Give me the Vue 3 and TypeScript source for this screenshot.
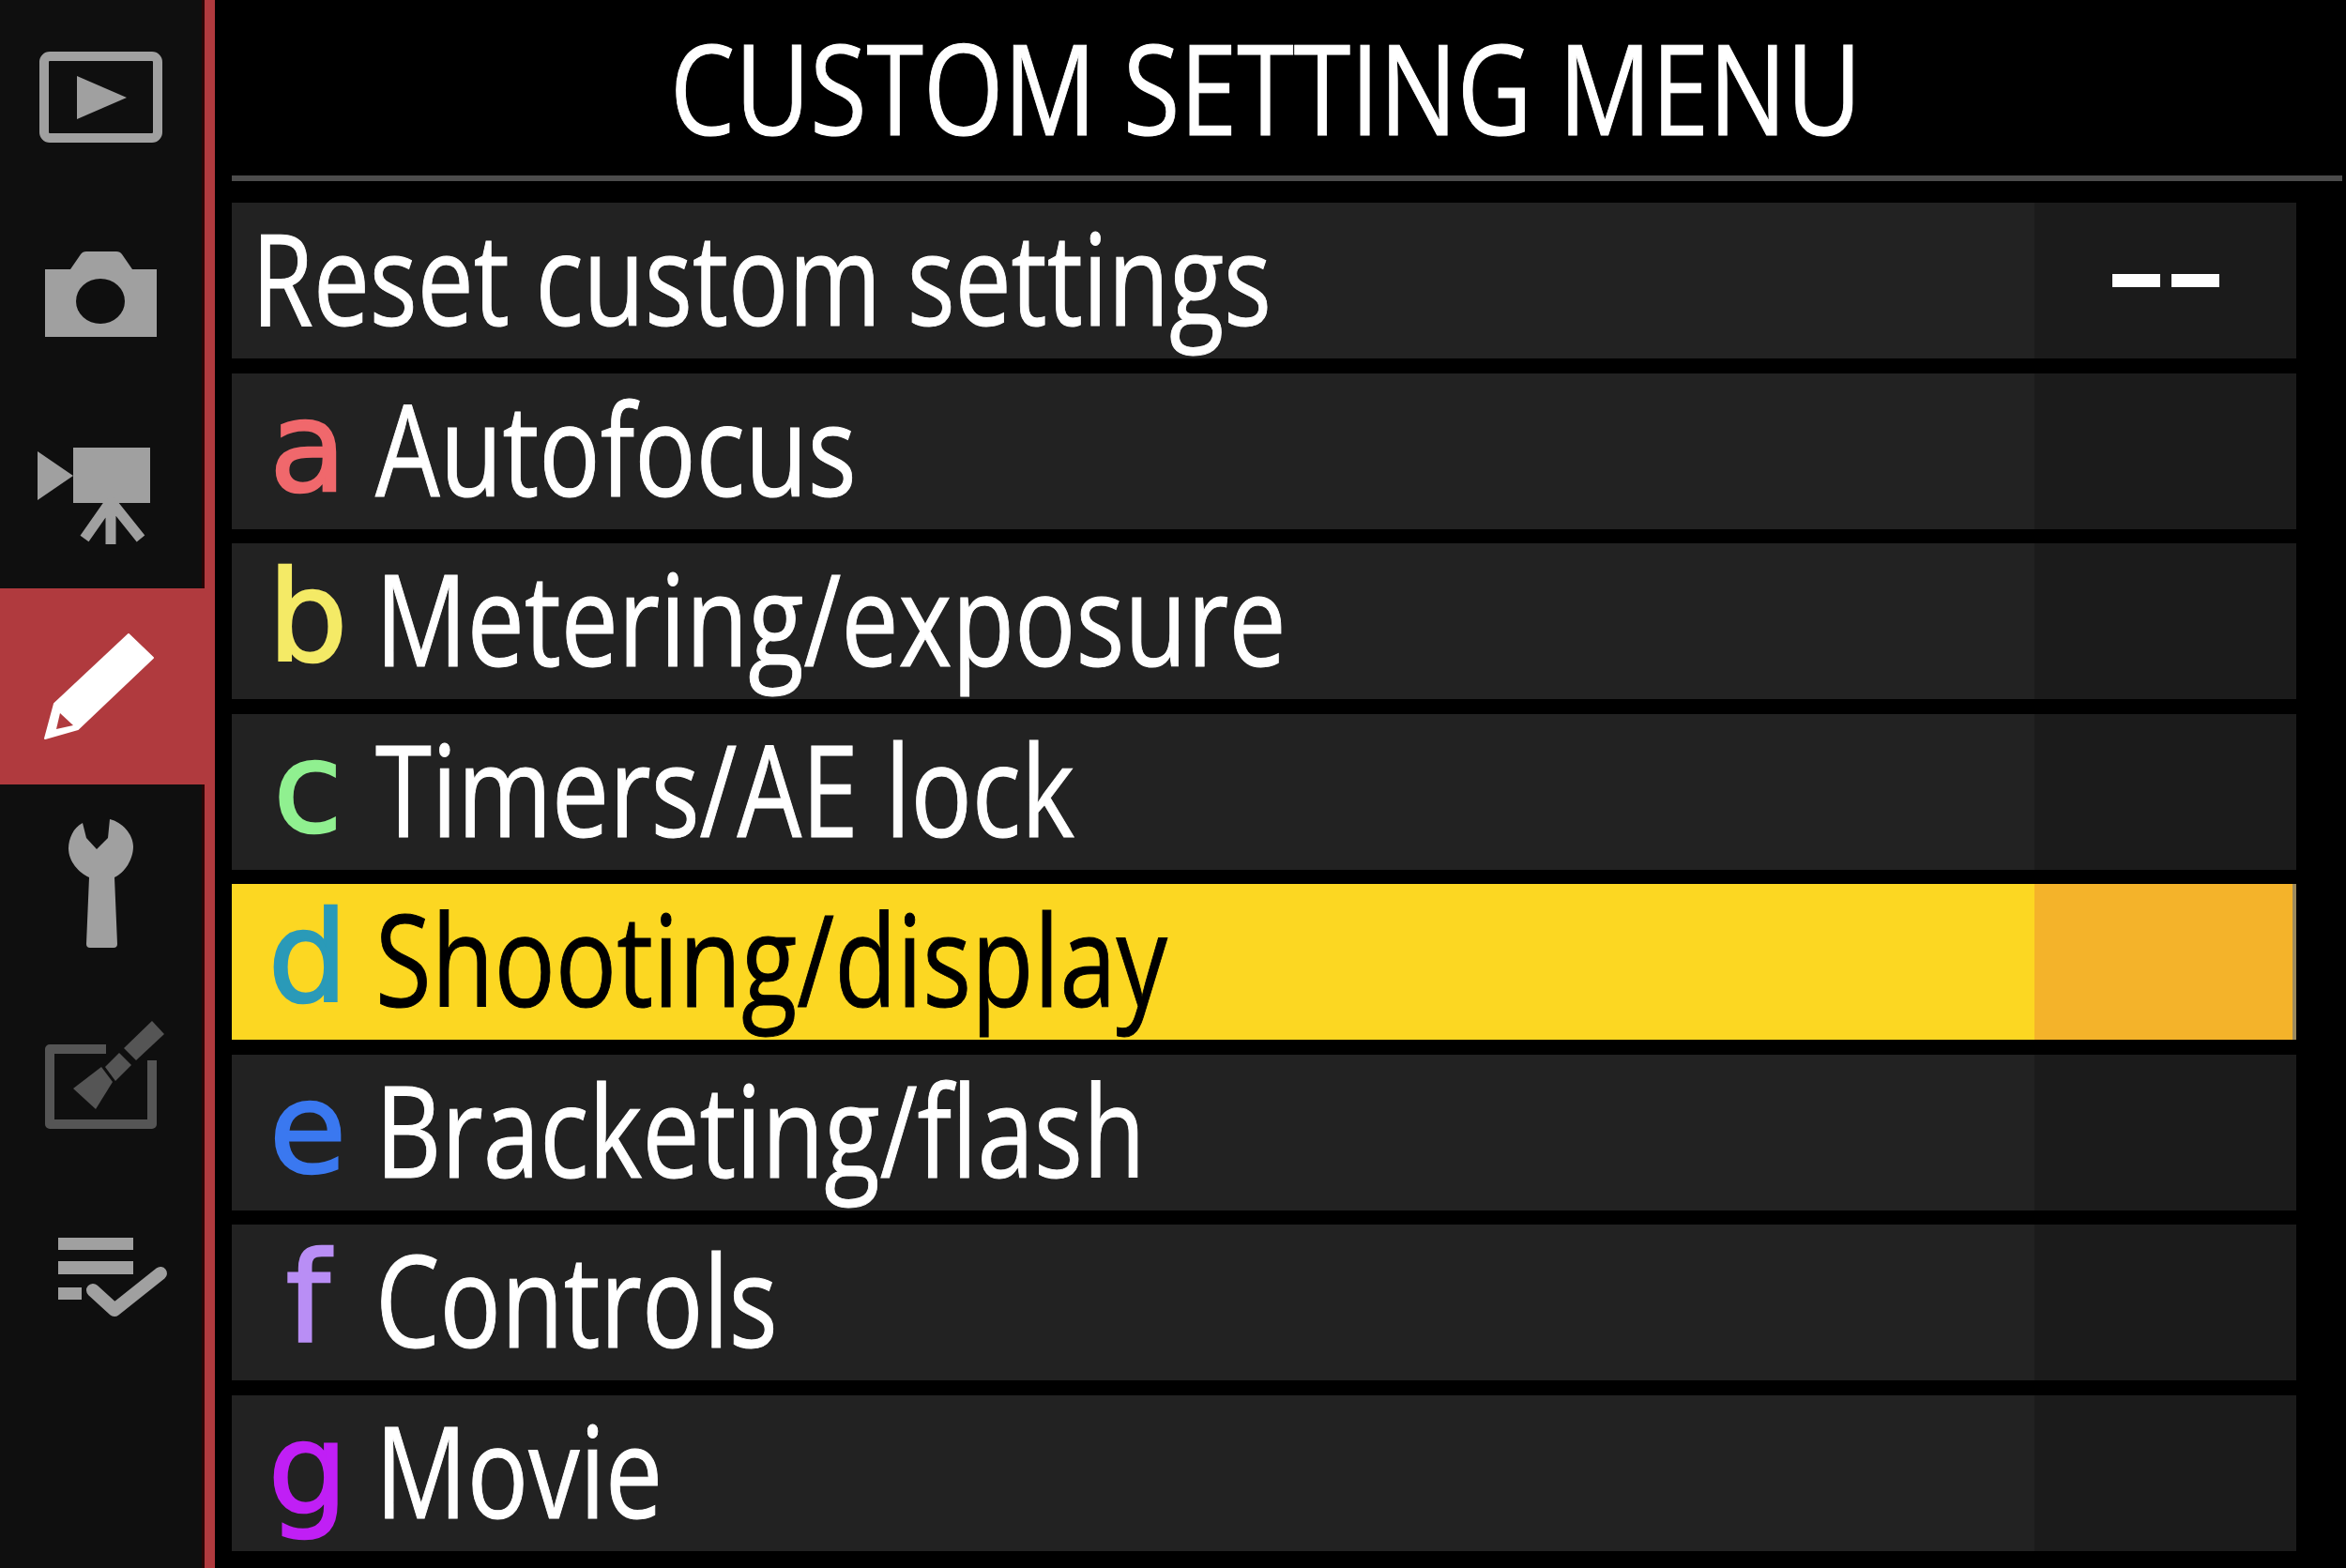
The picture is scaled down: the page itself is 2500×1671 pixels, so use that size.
<script setup lang="ts">
type MenuRow = { key: string; label: string; color: string; active?: boolean };

const rows: MenuRow[] = [
  { key: 'a', label: 'Autofocus', color: '#f0686c' },
  { key: 'b', label: 'Metering/exposure', color: '#f4ea66' },
  { key: 'c', label: 'Timers/AE lock', color: '#90f090' },
  { key: 'd', label: 'Shooting/display', color: '#2a9ab8', active: true },
  { key: 'e', label: 'Bracketing/flash', color: '#3a78f0' },
  { key: 'f', label: 'Controls', color: '#b98ef5' },
  { key: 'g', label: 'Movie', color: '#c01ff5' },
];
</script>

<template>
  <div class="screen">
    <nav class="side">
      <div class="tab">
        <svg viewBox="0 0 218 209" class="ico">
          <rect x="47" y="60" width="121" height="87" rx="6" fill="none" stroke="#a0a0a0" stroke-width="10" />
          <polygon points="82,81 135,104 82,127" fill="#a0a0a0" />
        </svg>
      </div>
      <div class="tab">
        <svg viewBox="0 0 218 209" class="ico">
          <path d="M48 78H75L86 62Q88 59 92 59H124Q128 59 130 62L141 78H167V150H48Z" fill="#a0a0a0" />
          <ellipse cx="107" cy="112" rx="26" ry="24" fill="#0f0f0f" />
        </svg>
      </div>
      <div class="tab">
        <svg viewBox="0 0 218 209" class="ico">
          <polygon points="40,63 78,89 40,115" fill="#a0a0a0" />
          <rect x="78" y="59" width="82" height="59" fill="#a0a0a0" />
          <path d="M118 116L90 156M118 116V162M118 116L150 156" stroke="#a0a0a0" stroke-width="11" fill="none" />
        </svg>
      </div>
      <div class="tab tab--active">
        <svg viewBox="0 0 218 209" class="ico">
          <path d="M137 49L163 74L83 150L48 160L58 123Z" fill="#fff" stroke="#fff" stroke-width="2" stroke-linejoin="round" />
          <polygon points="64,133 78,146 60,150" fill="#b03a3e" />
        </svg>
      </div>
      <div class="tab">
        <svg viewBox="0 0 218 209" class="ico">
          <path d="M88 41C78 46 73 58 73 68C73 82 84 94 95 99L92 170Q92 174 96 174H121Q125 174 125 170L122 99C133 94 142 80 142 66C142 53 130 40 117 37L115 57L103 69L92 57Z" fill="#a0a0a0" />
        </svg>
      </div>
      <div class="tab">
        <svg viewBox="0 0 218 209" class="ico">
          <path d="M113 73H53V153H162V85" fill="none" stroke="#555" stroke-width="10" stroke-linejoin="round" />
          <polygon points="162,43 175,57 145,85 132,72" fill="#555" />
          <polygon points="127,77 140,90 123,107 112,92" fill="#555" />
          <polygon points="108,92 120,108 102,137 78,115" fill="#555" />
        </svg>
      </div>
      <div class="tab">
        <svg viewBox="0 0 218 209" class="ico">
          <rect x="62" y="65" width="80" height="13" fill="#a0a0a0" />
          <rect x="62" y="90" width="80" height="14" fill="#a0a0a0" />
          <rect x="62" y="118" width="25" height="13" fill="#a0a0a0" />
          <path d="M99 121L122 142L171 103" fill="none" stroke="#a0a0a0" stroke-width="14" stroke-linecap="round" stroke-linejoin="round" />
        </svg>
      </div>
    </nav>

    <main class="body">
      <h1 class="title"><span class="squeeze squeeze--title">CUSTOM SETTING MENU</span></h1>
      <div class="rule"></div>
      <ul class="list">
        <li class="row">
          <span class="name name--reset"><span class="squeeze squeeze--reset">Reset custom settings</span></span>
          <span class="val"><i class="dash"></i><i class="dash"></i></span>
        </li>
        <li v-for="r in rows" :key="r.key" class="row" :class="{ 'row--active': r.active }">
          <span class="name">
            <span class="key" :style="{ color: r.color }">{{ r.key }}</span>
            <span class="squeeze">{{ r.label }}</span>
          </span>
          <span class="val"></span>
        </li>
      </ul>
    </main>
  </div>
</template>

<style>
html,
body {
  margin: 0;
  background: #000;
}
</style>

<style scoped>
.screen {
  display: flex;
  width: 2500px;
  height: 1671px;
  overflow: hidden;
  background: #000;
  font-family: 'Open Sans', 'Noto Sans', sans-serif;
}

.side {
  width: 218px;
  flex: none;
  background: #0f0f0f;
  border-right: 11px solid #b03a3e;
  box-shadow: inset -3px 0 0 #2a0505;
}

.tab {
  height: 209px;
}

.tab--active {
  background: #b03a3e;
  width: 229px;
}

.ico {
  display: block;
  width: 218px;
  height: 209px;
}

.body {
  flex: 1;
  padding-left: 18px;
}

.title {
  height: 187px;
  margin: 0;
  padding-left: 467px;
  font-size: 134px;
  line-height: 184px;
  font-weight: 400;
  color: #fff;
  white-space: nowrap;
  -webkit-text-stroke: 1px #fff;
}

.squeeze {
  display: inline-block;
  transform: scaleX(0.8);
  transform-origin: left center;
}

.squeeze--title {
  transform: scaleX(0.82);
}

.squeeze--reset {
  transform: scaleX(0.785);
}

.rule {
  height: 6px;
  width: 2249px;
  background: #4c4c4c;
}

.list {
  list-style: none;
  margin: 23px 0 0;
  padding: 0;
  width: 2200px;
  display: flex;
  flex-direction: column;
  gap: 15.5px;
}

.row {
  display: flex;
  height: 166px;
  background: #222;
  color: #fff;
}

.row--active {
  background: #fcd722;
  color: #000;
}

.name {
  flex: 1;
  display: flex;
  align-items: center;
  padding: 0 0 8px 24px;
  font-size: 136px;
  line-height: 158px;
  white-space: nowrap;
  -webkit-text-stroke: 1px currentColor;
}

.name--reset {
  padding-left: 21px;
}

.key {
  width: 114px;
  margin-right: 15px;
  flex: none;
  font-family: 'DejaVu Sans', sans-serif;
  font-size: 134px;
  font-weight: 400;
  -webkit-text-stroke: 2.5px currentColor;
  text-align: center;
}

.val {
  width: 279px;
  flex: none;
  display: flex;
  align-items: center;
  justify-content: center;
  gap: 12px;
  background: #1b1b1b;
}

.row--active .val {
  background: #f4b32a;
  box-shadow: inset -4px 0 0 #9c8a5e;
}

.dash {
  display: block;
  width: 51px;
  height: 14px;
  background: #fff;
}
</style>
